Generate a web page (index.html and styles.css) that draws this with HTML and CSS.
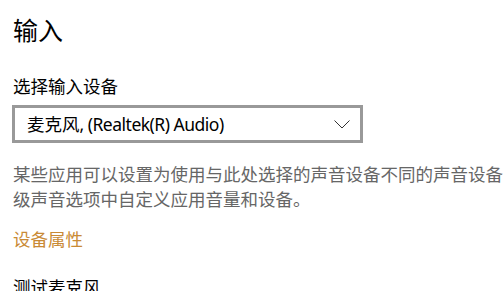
FILE: index.html
```html
<!DOCTYPE html>
<html lang="zh-CN">
<head>
<meta charset="utf-8">
<title>输入</title>
<link rel="stylesheet" href="styles.css">
</head>
<body>
<main class="page">
  <h1 class="title">输入</h1>
  <h2 class="label">选择输入设备</h2>
  <div class="select">
    <span class="select-text">麦克风<span class="latin">, (Realtek(R) Audio)</span></span>
    <svg class="chevron" width="16" height="9" viewBox="0 0 16 9" aria-hidden="true">
      <polyline points="0.5,0.5 8,8 15.5,0.5" fill="none" stroke="#333" stroke-width="1"/>
    </svg>
  </div>
  <p class="desc">某些应用可以设置为使用与此处选择的声音设备不同的声音设备。在高级声音选项中自定义应用音量和设备。</p>
  <a class="link" href="#">设备属性</a>
  <h2 class="label section">测试麦克风</h2>
</main>
</body>
</html>
```

FILE: styles.css
```css
html, body {
  margin: 0;
  padding: 0;
  background: #ffffff;
  overflow: hidden;
}

body {
  font-family: "Noto Sans", "Noto Sans CJK SC", sans-serif;
  color: #000;
}

.page {
  padding: 14px 0 0 13px;
  display: flex;
  flex-direction: column;
  align-items: flex-start;
}

.title {
  margin: 0;
  font-size: 25px;
  font-weight: 400;
  line-height: 32px;
}

.label {
  margin: 27px 0 0 0;
  font-size: 17.5px;
  font-weight: 400;
  line-height: 26px;
}

.select {
  margin: 6px 0 0 -1px;
  box-sizing: border-box;
  width: 351px;
  height: 38px;
  border: 3px solid #999;
  display: flex;
  align-items: center;
  justify-content: space-between;
  padding: 0 10px 0 12px;
}

.select-text {
  font-size: 17.5px;
  line-height: 26px;
}

.latin {
  letter-spacing: -0.5px;
}

.chevron {
  display: block;
}

.desc {
  margin: 19px 0 0 0;
  width: 550px;
  font-size: 17.5px;
  line-height: 25px;
  color: #666;
}

.link {
  margin-top: 15px;
  font-size: 17.5px;
  line-height: 25px;
  color: #c98a35;
  text-decoration: none;
}

.section {
  margin-top: 22px;
}
```
